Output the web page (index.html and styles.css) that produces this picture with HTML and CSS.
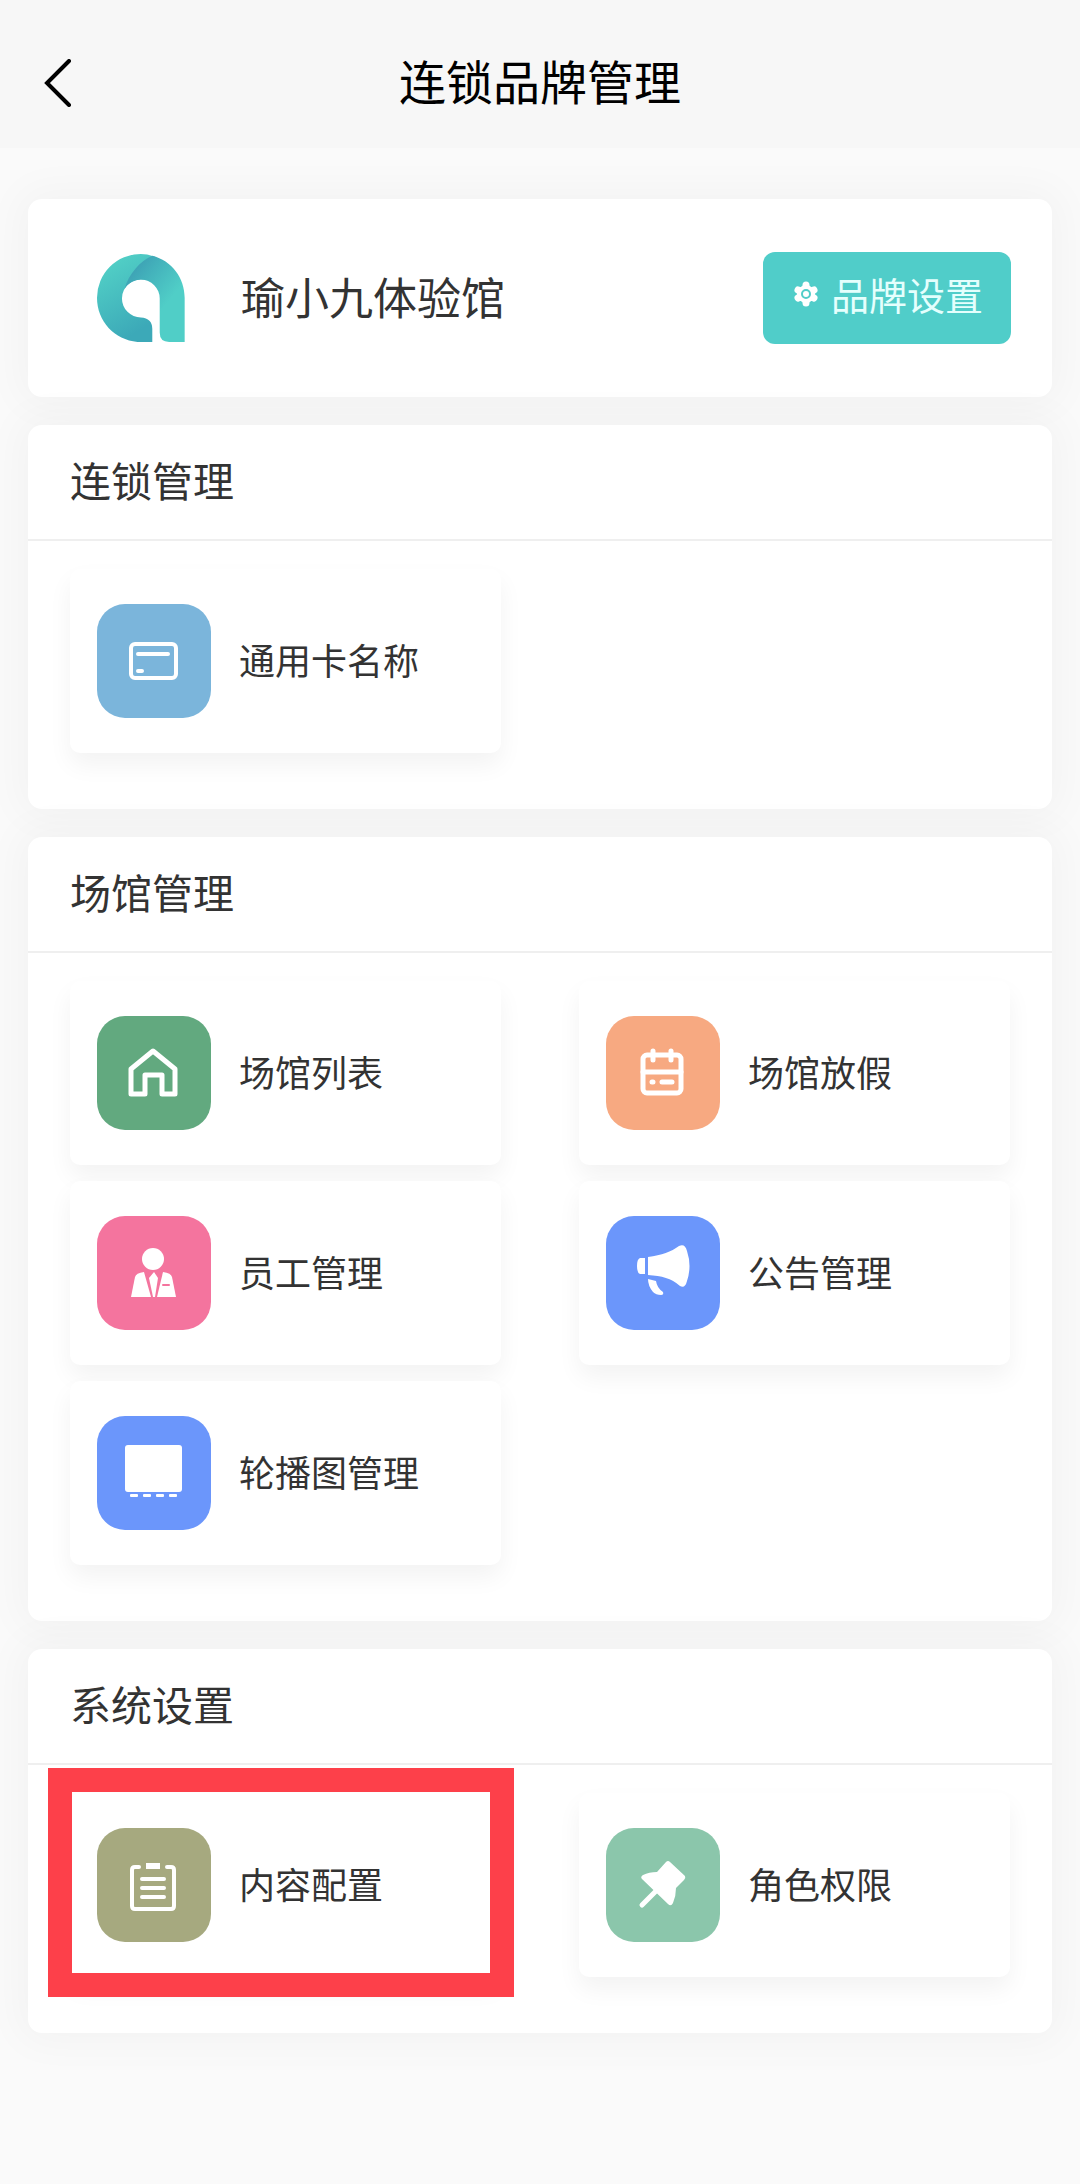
FILE: index.html
```
<!DOCTYPE html>
<html lang="zh-CN">
<head>
    <meta charset="UTF-8">
    <meta name="viewport" content="width=device-width, initial-scale=1.0">
    <title>连锁品牌管理</title>
    <link rel="stylesheet" href="styles.css">
</head>
<body>
    <header class="navbar">
        <button class="back" type="button" aria-label="返回">
            <svg viewBox="0 0 28 48"><path d="M25 2 L3 24 L25 46"/></svg>
        </button>
        <h1>连锁品牌管理</h1>
    </header>

    <main class="content">
        <section class="card brand">
            <svg class="brand-logo" viewBox="54 70 261 261">
                <defs>
                    <linearGradient id="logo-left" x1="0" y1="0" x2="0.4" y2="1">
                        <stop offset="0.2" stop-color="#50cdc5"/>
                        <stop offset="1" stop-color="#3ca9b8"/>
                    </linearGradient>
                    <linearGradient id="logo-right" x1="0.1" y1="0.1" x2="0.7" y2="0.8">
                        <stop offset="0" stop-color="#3c9db3"/>
                        <stop offset="0.3" stop-color="#43b1bb"/>
                        <stop offset="0.8" stop-color="#50cec7"/>
                    </linearGradient>
                </defs>
                <path fill="url(#logo-left)" d="M218 331 H174 C106 325 54 270 54 200 A130 130 0 0 1 184 70 Q206 70 226 78 L200 148 A56 56 0 0 0 128 202 A56 56 0 0 0 184 258 Q218 260 218 292 Z"/>
                <path fill="url(#logo-right)" d="M136 172 C148 130 182 90 218 75 C276 90 314 140 314 200 V331 H268 Q240 331 240 303 V202 A56 56 0 0 0 184 146 Q154 148 136 172 Z"/>
            </svg>
            <h2 class="brand-name">瑜小九体验馆</h2>
            <button class="brand-button" type="button">
                <svg viewBox="0 0 26 26">
                    <path d="M13 4 V22 M5 9 L21 17 M5 17 L21 9"/>
                    <circle class="gear-body" cx="13" cy="13" r="9"/>
                    <circle class="gear-hole" cx="13" cy="13" r="4"/>
                </svg>
                品牌设置
            </button>
        </section>

        <section class="card">
            <h2 class="card-title">连锁管理</h2>
            <nav class="tiles">
                <a class="tile" href="#">
                    <svg class="icon sky" viewBox="0 0 114 114">
                        <rect x="34" y="40" width="45" height="34" rx="4"/>
                        <path d="M41 50 H71 M41 67 H45"/>
                    </svg>
                    <span>通用卡名称</span>
                </a>
            </nav>
        </section>

        <section class="card">
            <h2 class="card-title">场馆管理</h2>
            <nav class="tiles">
                <a class="tile" href="#">
                    <svg class="icon green" viewBox="0 0 114 114">
                        <path d="M34 78 V53 L56 35 L78 53 V78 H65 V59 H48 V78 Z"/>
                    </svg>
                    <span>场馆列表</span>
                </a>
                <a class="tile" href="#">
                    <svg class="icon orange" viewBox="0 0 114 114">
                        <rect x="37" y="39" width="38" height="38" rx="4"/>
                        <path d="M37 56 H75 M47 35 V44 M65 35 V44"/>
                        <path d="M46 66 H47 M56 66 H66"/>
                    </svg>
                    <span>场馆放假</span>
                </a>
                <a class="tile" href="#">
                    <svg class="icon pink solid" viewBox="0 0 114 114">
                        <circle cx="56" cy="43" r="11"/>
                        <path d="M34 81 L38 61 Q39 57 47 56 L54 81 Z"/>
                        <path d="M79 81 L75 61 Q74 57 66 56 L60 81 Z"/>
                        <path d="M57 56 L61 62 L58 81 H56 L52 62 Z"/>
                        <path class="detail" d="M66 69 H72"/>
                    </svg>
                    <span>员工管理</span>
                </a>
                <a class="tile" href="#">
                    <svg class="icon blue solid" viewBox="0 0 114 114">
                        <path d="M39 42 V58 H34 Q31 57 31 50 Q31 43 34 42 Z"/>
                        <path d="M42 41 C56 39 65 36 73 30 Q79 27 81 35 Q86 50 81 65 Q79 73 74 70 C65 62 56 60 42 59 Z"/>
                        <path d="M42 63 L50 65 Q51 72 57 76 Q58 79 55 79 Q50 79 47 76 Q42 70 42 63 Z"/>
                    </svg>
                    <span>公告管理</span>
                </a>
                <a class="tile" href="#">
                    <svg class="icon blue solid" viewBox="0 0 114 114">
                        <rect x="28" y="29" width="57" height="47" rx="3"/>
                        <rect x="33" y="78" width="8" height="3" rx="1"/>
                        <rect x="46" y="78" width="8" height="3" rx="1"/>
                        <rect x="59" y="78" width="8" height="3" rx="1"/>
                        <rect x="72" y="78" width="8" height="3" rx="1"/>
                    </svg>
                    <span>轮播图管理</span>
                </a>
            </nav>
        </section>

        <section class="card">
            <h2 class="card-title">系统设置</h2>
            <nav class="tiles">
                <a class="tile marked" href="#">
                    <svg class="icon olive" viewBox="0 0 114 114">
                        <path d="M42 39 H38 Q35 39 35 42 V78 Q35 81 38 81 H74 Q77 81 77 78 V42 Q77 39 74 39 H70"/>
                        <path d="M45 51 H67 M45 60 H67 M45 69 H67"/>
                        <path class="clip" d="M49 38 H63"/>
                    </svg>
                    <span>内容配置</span>
                </a>
                <a class="tile" href="#">
                    <svg class="icon mint solid" viewBox="0 0 114 114">
                        <path d="M60 34 Q62 32 64 34 L79 48 Q80 50 78 52 L70 60 Q70 68 67 75 Q65 79 62 76 L36 51 Q34 49 37 47 Q43 44 51 44 Z"/>
                        <path class="stick" d="M51 62 L36 77"/>
                    </svg>
                    <span>角色权限</span>
                </a>
            </nav>
        </section>
    </main>
</body>
</html>
```
FILE: styles.css
```
* {
    margin: 0;
    padding: 0;
    box-sizing: border-box;
}

body {
    min-height: 100vh;
    background: #fafafa;
    color: #333;
    font-family: "Noto Sans CJK SC", sans-serif;
}

h1,
h2 {
    font-weight: 400;
}

button {
    border: none;
    font-family: inherit;
    cursor: pointer;
}

.navbar {
    display: grid;
    grid-template-columns: 28px 1fr 28px;
    align-items: center;
    padding: 45px 44px 27px;
    background: #f7f7f7;
}

.navbar h1 {
    padding-bottom: 6px;
    color: #000;
    font-size: 47px;
    line-height: 70px;
    text-align: center;
}

.back {
    height: 48px;
    background: none;
}

.back svg {
    display: block;
    width: 28px;
    height: 48px;
    fill: none;
    stroke: #000;
    stroke-width: 4;
    stroke-linecap: round;
}

.content {
    display: flex;
    flex-direction: column;
    gap: 28px;
    padding: 51px 28px;
}

.card {
    background: #fff;
    border-radius: 14px;
    box-shadow: 0 0 40px 10px rgba(0, 0, 0, 0.03);
}

.brand {
    display: flex;
    align-items: center;
    padding: 53px 41px 53px 69px;
}

.brand-logo {
    width: 88px;
    height: 88px;
}

.brand-name {
    flex: 1;
    margin-left: 56px;
    padding-bottom: 4px;
    font-size: 44px;
    line-height: 66px;
}

.brand-button {
    display: flex;
    align-items: center;
    gap: 12px;
    padding: 14px 28px 22px 30px;
    border-radius: 12px;
    background: #50cdc9;
    color: #e4fffd;
    font-size: 38px;
    line-height: 56px;
}

.brand-button svg {
    width: 26px;
    height: 26px;
    stroke: #fff;
    stroke-width: 7;
    stroke-linecap: round;
}

.gear-body {
    fill: #fff;
    stroke: none;
}

.gear-hole {
    fill: none;
    stroke: #50cdc9;
    stroke-width: 2;
}

.card-title {
    padding: 24px 42px 30px;
    border-bottom: 2px solid #efefef;
    font-size: 41px;
    line-height: 60px;
}

.tiles {
    display: grid;
    grid-template-columns: 1fr 1fr;
    gap: 16px 78px;
    padding: 28px 42px 56px;
}

.tile {
    display: flex;
    align-items: center;
    gap: 28px;
    padding: 35px 27px;
    border-radius: 10px;
    background: #fff;
    box-shadow: 0 12px 24px rgba(0, 0, 0, 0.05);
    color: #333;
    font-size: 36px;
    line-height: 54px;
    text-decoration: none;
}

.tile span {
    padding-bottom: 4px;
}

/* red frame drawn over the highlighted entry */
.marked {
    position: relative;
}

.marked::after {
    content: "";
    position: absolute;
    inset: -25px -13px -20px -22px;
    border: 24px solid #fd404a;
}

.icon {
    flex: none;
    width: 114px;
    height: 114px;
    border-radius: 28px;
    fill: none;
    stroke: #fff;
    stroke-width: 5;
    stroke-linecap: round;
    stroke-linejoin: round;
}

.icon.solid {
    fill: #fff;
    stroke: none;
}

.icon.sky,
.icon.olive {
    stroke-width: 4;
}

.icon .clip {
    stroke-width: 6;
    stroke-linecap: butt;
}

.icon .stick {
    stroke: #fff;
    stroke-width: 5;
}

.icon .detail {
    stroke: #f4749e;
    stroke-width: 2;
}

.sky { background: #7bb5db; }
.green { background: #62a97f; }
.orange { background: #f7a981; }
.pink { background: #f4749e; }
.blue { background: #6b96fb; }
.olive { background: #a6a97f; }
.mint { background: #8bc6ab; }
```
